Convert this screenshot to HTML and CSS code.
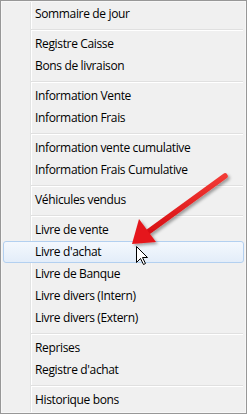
FILE: index.html
```html
<!DOCTYPE html>
<html lang="fr">
<head>
  <meta charset="UTF-8" />
  <title>Menu</title>
  <link rel="stylesheet" href="styles.css">
</head>
<body>
  <div class="menu">
    <div class="item">Sommaire de jour</div>
    <div class="sep"></div>
    <div class="item">Registre Caisse</div>
    <div class="item">Bons de livraison</div>
    <div class="sep"></div>
    <div class="item">Information Vente</div>
    <div class="item">Information Frais</div>
    <div class="sep"></div>
    <div class="item">Information vente cumulative</div>
    <div class="item">Information Frais Cumulative</div>
    <div class="sep"></div>
    <div class="item">Véhicules vendus</div>
    <div class="sep"></div>
    <div class="item">Livre de vente</div>
    <div class="item hover">Livre d'achat</div>
    <div class="item">Livre de Banque</div>
    <div class="item">Livre divers (Intern)</div>
    <div class="item">Livre divers (Extern)</div>
    <div class="sep"></div>
    <div class="item">Reprises</div>
    <div class="item">Registre d'achat</div>
    <div class="sep"></div>
    <div class="item">Historique bons</div>

    <!-- annotation arrow + mouse pointer drawn over the menu -->
    <svg class="overlay" width="247" height="414" viewBox="0 0 247 414">
      <defs>
        <filter id="shadow" x="-20%" y="-20%" width="140%" height="140%">
          <feDropShadow dx="2" dy="2" stdDeviation="1.5" flood-color="#000" flood-opacity="0.35"/>
        </filter>
        <linearGradient id="red" x1="0" y1="0" x2="0" y2="1">
          <stop offset="0" stop-color="#f23a35"/>
          <stop offset="1" stop-color="#d80f14"/>
        </linearGradient>
      </defs>
      <g filter="url(#shadow)">
        <line x1="225" y1="176" x2="148" y2="232" stroke="url(#red)" stroke-width="5.5" stroke-linecap="round"/>
        <polygon points="132,244 139,219 156,242" fill="#e5161b"/>
      </g>
      <polygon class="cursor" points="136.5,246.5 136.5,262.5 140.5,258.5 143.5,264.5 145.5,263.5 142.5,257.5 147.5,257.5" fill="#fff" stroke="#000" stroke-width="1" stroke-linejoin="miter"/>
    </svg>
  </div>
</body>
</html>
```

FILE: styles.css
```css
body {
  margin: 0;
  background: #f0f0f0;
  font-family: "Open Sans", "Noto Sans", sans-serif;
  font-size: 12px;
  letter-spacing: -0.35px;
  color: #000;
}
.menu {
  position: relative;
  box-sizing: border-box;
  width: 247px;
  height: 414px;
  padding: 2px;
  border: 1px solid #979797;
  box-shadow: inset 0 0 0 1px #f7f7f7;
  background:
    linear-gradient(to right, transparent 29px, #e2e3e3 29px, #e2e3e3 30px, #fff 30px, #fff 31px, transparent 31px),
    #f0f0f0;
}
.item {
  height: 22px;
  line-height: 22px;
  padding-left: 32px;
  white-space: nowrap;
}
.item.hover {
  box-sizing: border-box;
  line-height: 20px;
  padding-left: 31px;
  border: 1px solid #b3d0f0;
  border-radius: 3px;
  background: linear-gradient(to bottom, #f4f8fd, #e3edf9);
}
.sep {
  height: 8px;
  margin-left: 28px;
  margin-right: 1px;
  background: linear-gradient(to bottom, transparent 4px, #e0e0e0 4px, #e0e0e0 5px, #fff 5px, #fff 6px, transparent 6px);
}
.overlay {
  position: absolute;
  left: -1px;
  top: -1px;
  pointer-events: none;
}
```
